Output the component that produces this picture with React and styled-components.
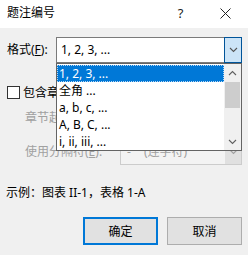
import React from 'react'
import styled, { createGlobalStyle } from 'styled-components'

const GlobalStyle = createGlobalStyle`
  html, body {
    margin: 0;
    padding: 0;
    background: #f0f0f0;
  }
  body {
    font-family: "Noto Sans", "Noto Sans CJK SC", sans-serif;
    font-size: 12px;
    color: #000;
  }
`

const listItems = ['1, 2, 3, ...', '全角 ...', 'a, b, c, ...', 'A, B, C, ...', 'i, ii, iii, ...']

const Chevron = ({ up, color = '#404040' }) => (
  <svg width="9" height="6" viewBox="0 0 9 6">
    <polyline
      points={up ? '1,5 4.5,1.5 8,5' : '1,1 4.5,4.5 8,1'}
      fill="none"
      stroke={color}
      strokeWidth="1.1"
    />
  </svg>
)

const App = () => {
  return (
    <>
      <GlobalStyle />
      <Dialog>
        <TitleBar>
          <Title>题注编号</Title>
          <CaptionButton>?</CaptionButton>
          <CaptionButton>
            <svg width="11" height="11" viewBox="0 0 11 11">
              <path d="M0.5 0.5 L10.5 10.5 M10.5 0.5 L0.5 10.5" stroke="#222" strokeWidth="1" />
            </svg>
          </CaptionButton>
        </TitleBar>

        <Body>
          <FormatRow>
            <Label $width={49}>格式(<u>F</u>):</Label>
            <ComboWrap>
              <Combo>
                <ComboText>1, 2, 3, ...</ComboText>
                <DropButton>
                  <Chevron color="#555" />
                </DropButton>
              </Combo>
              <DropList>
                <Items>
                  {listItems.map((item, i) => (
                    <Item key={item} $selected={i === 0}>{item}</Item>
                  ))}
                </Items>
                <ScrollBar>
                  <ScrollArrow><Chevron up color="#606060" /></ScrollArrow>
                  <Thumb />
                  <ScrollTrack />
                  <ScrollArrow><Chevron color="#606060" /></ScrollArrow>
                </ScrollBar>
              </DropList>
            </ComboWrap>
          </FormatRow>

          <CheckRow>
            <CheckBox />
            <span>包含章节号(<u>C</u>)</span>
          </CheckRow>

          <SubRow $top={6}>
            <Label $width={95} $disabled>章节起始样式(<u>P</u>):</Label>
            <DisabledCombo>
              <ComboText>标题 1</ComboText>
              <DisabledButton><Chevron color="#a0a0a0" /></DisabledButton>
            </DisabledCombo>
          </SubRow>

          <SubRow $top={8}>
            <Label $width={95} $disabled>使用分隔符(<u>E</u>):</Label>
            <DisabledCombo>
              <ComboText>
                <Dash>-</Dash>(连字符)
              </ComboText>
              <DisabledButton><Chevron color="#a0a0a0" /></DisabledButton>
            </DisabledCombo>
          </SubRow>

          <Example>示例：图表 II-1，表格 1-A</Example>

          <ButtonRow>
            <Button $default>确定</Button>
            <Button>取消</Button>
          </ButtonRow>
        </Body>
      </Dialog>
    </>
  )
}

const Dialog = styled.div`
  width: 248px;
  height: 255px;
  background: #f0f0f0;
  display: flex;
  flex-direction: column;
  overflow: hidden;
`

const TitleBar = styled.div`
  height: 28px;
  background: #fff;
  display: flex;
  align-items: center;
  padding-left: 7px;
  flex-shrink: 0;
`

const Title = styled.div`
  flex: 1;
  font-size: 12px;
  line-height: 16px;
  margin-top: -2px;
`

const CaptionButton = styled.div`
  width: 45px;
  height: 28px;
  display: flex;
  align-items: center;
  justify-content: center;
  font-size: 13px;
  color: #222;
  margin-top: -2px;
`

const Body = styled.div`
  display: flex;
  flex-direction: column;
  padding: 0 6px 0 7px;
`

const FormatRow = styled.div`
  margin-top: 9px;
  height: 26px;
  display: flex;
  align-items: center;
`

const Label = styled.div`
  width: ${p => p.$width}px;
  flex-shrink: 0;
  white-space: nowrap;
  line-height: 16px;
  color: ${p => (p.$disabled ? '#a0a0a0' : '#000')};
`

const ComboWrap = styled.div`
  position: relative;
  width: 186px;
  height: 26px;
`

const Combo = styled.div`
  box-sizing: border-box;
  height: 26px;
  border: 1px solid #7a7a7a;
  background: #fff;
  display: flex;
  align-items: center;
`

const ComboText = styled.div`
  flex: 1;
  padding-left: 4px;
  white-space: nowrap;
  line-height: 16px;
`

const DropButton = styled.div`
  box-sizing: border-box;
  width: 18px;
  height: 26px;
  margin: -1px -1px -1px 0;
  background: #cce4f7;
  border: 1px solid #005499;
  display: flex;
  align-items: center;
  justify-content: center;
`

const DropList = styled.div`
  position: absolute;
  top: 26px;
  left: 0;
  width: 186px;
  height: 88px;
  box-sizing: border-box;
  border: 1px solid #646464;
  background: #fff;
  display: flex;
  z-index: 10;
`

const Items = styled.div`
  flex: 1;
  padding-top: 1px;
  overflow: hidden;
`

const Item = styled.div`
  height: 17px;
  box-sizing: border-box;
  line-height: 17px;
  padding-left: 2px;
  white-space: nowrap;
  background: ${p => (p.$selected ? '#0078d7' : 'transparent')};
  color: ${p => (p.$selected ? '#fff' : '#000')};
  outline: ${p => (p.$selected ? '1px dotted #b8d8f4' : 'none')};
  outline-offset: -1px;
`

const ScrollBar = styled.div`
  width: 17px;
  background: #f0f0f0;
  display: flex;
  flex-direction: column;
  align-items: center;
`

const ScrollArrow = styled.div`
  height: 17px;
  width: 17px;
  display: flex;
  align-items: center;
  justify-content: center;
  flex-shrink: 0;
`

const Thumb = styled.div`
  width: 15px;
  height: 26px;
  margin-top: 1px;
  background: #cdcdcd;
`

const ScrollTrack = styled.div`
  flex: 1;
`

const CheckRow = styled.div`
  margin-top: 23px;
  height: 13px;
  display: flex;
  align-items: center;
  gap: 3px;
  line-height: 16px;
`

const CheckBox = styled.div`
  width: 13px;
  height: 13px;
  box-sizing: border-box;
  border: 1px solid #333;
  background: #fff;
`

const SubRow = styled.div`
  margin-top: ${p => p.$top}px;
  height: 26px;
  display: flex;
  align-items: center;
  padding-left: 18px;
`

const DisabledCombo = styled.div`
  box-sizing: border-box;
  width: 122px;
  height: 26px;
  border: 1px solid #cccccc;
  background: #f3f3f3;
  color: #a0a0a0;
  display: flex;
  align-items: center;
`

const DisabledButton = styled.div`
  width: 16px;
  height: 24px;
  background: #e0e0e0;
  display: flex;
  align-items: center;
  justify-content: center;
`

const Dash = styled.span`
  display: inline-block;
  width: 17px;
  padding-left: 2px;
`

const Example = styled.div`
  margin-top: 20px;
  height: 16px;
  line-height: 16px;
  margin-left: -1px;
`

const ButtonRow = styled.div`
  margin-top: 16px;
  display: flex;
  justify-content: flex-end;
  gap: 9px;
`

const Button = styled.div`
  box-sizing: border-box;
  width: 75px;
  height: 28px;
  background: #e1e1e1;
  border: ${p => (p.$default ? '2px solid #0078d7' : '1px solid #adadad')};
  display: flex;
  align-items: center;
  justify-content: center;
`

export default App
